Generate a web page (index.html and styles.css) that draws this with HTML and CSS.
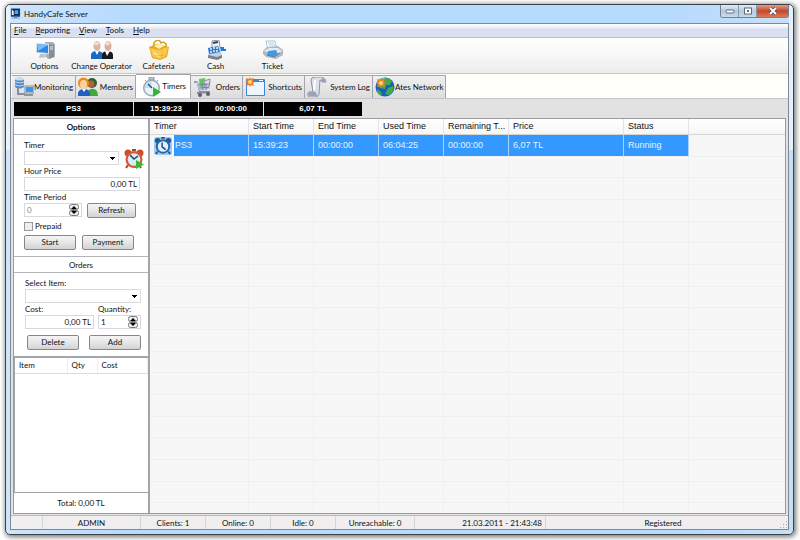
FILE: index.html
```html
<!DOCTYPE html>
<html lang="en">
<head>
<meta charset="utf-8">
<title>HandyCafe Server</title>
<link rel="stylesheet" href="styles.css">
</head>
<body>
<div class="window">
  <header class="titlebar">
    <svg class="app-icon" viewBox="0 0 12 12"><rect x="1" y="0" width="10" height="9" fill="#163f78"/><rect x="2" y="1" width="8" height="6" fill="#0d2750"/><path d="M5 2h4v4H5z" fill="#36b4f2"/><path d="M2 1l2 2v4H2z" fill="#fff"/><path d="M4 9h4v1h3v1H2v-1h2z" fill="#6f8fc0"/></svg>
    <h1 class="title">HandyCafe Server</h1>
    <div class="caption-buttons">
      <button class="caption" aria-label="Minimize"><svg viewBox="0 0 10 8"><rect x="1" y="3" width="8" height="3" rx="1" fill="#fff" stroke="#5d6c7c"/></svg></button>
      <button class="caption" aria-label="Maximize"><svg viewBox="0 0 10 8"><rect x="1.500" y="1" width="7" height="6" fill="#fff" stroke="#5d6c7c"/><rect x="4" y="3" width="2" height="2" fill="#5d6c7c"/></svg></button>
      <button class="caption close" aria-label="Close"><svg viewBox="0 0 10 8"><path d="M2 1l6 6M8 1L2 7" stroke="#5d4650" stroke-width="3.400"/><path d="M2 1l6 6M8 1L2 7" stroke="#fff" stroke-width="2"/></svg></button>
    </div>
  </header>
  <div class="client">
    <nav class="menubar">
      <a href="#"><u>F</u>ile</a><a href="#"><u>R</u>eporting</a><a href="#"><u>V</u>iew</a><a href="#"><u>T</u>ools</a><a href="#"><u>H</u>elp</a>
    </nav>
    <div class="toolbar">
      <button class="tool"><svg viewBox="0 0 20 20"><path d="M10 2h8l2 2v13l-7 2-2-2z" fill="#a9b1ba"/><path d="M14 4l5 1v12l-5 2z" fill="#858e99"/><path d="M15 7l3 0M15 9l3 0" stroke="#e8ecf0"/><path d="M1 3l13 1v10L1 13z" fill="#d8dfe6"/><path d="M2 4l11 1v8L2 12z" fill="#2e86e8"/><path d="M2 4l11 1-10 6z" fill="#74bdfa"/><path d="M5 14l5 0 2 3-8 1z" fill="#bcc3ca"/></svg>Options</button>
      <button class="tool"><svg class="wide" viewBox="0 0 24 20"><path d="M1 19v-4q0-3 4-4h4q4 1 4 4v4z" fill="#176bc4"/><path d="M12 19v-4q0-3 4-4h3q4 1 4 4v4z" fill="#17191e"/><path d="M5 11l2 4 2-4zM15 11l2 5 3-5z" fill="#fff"/><ellipse cx="7" cy="6" rx="3.500" ry="5" fill="#d9b49f"/><ellipse cx="18" cy="6" rx="3.500" ry="5" fill="#d9ae98"/><ellipse cx="6.500" cy="3.500" rx="2.500" ry="2" fill="#f3dccd"/><ellipse cx="17.500" cy="3.500" rx="2.500" ry="2" fill="#f3dccd"/></svg>Change Operator</button>
      <button class="tool"><svg viewBox="0 0 20 20"><path d="M5 8C3 0 11-2 12 3c4-3 7 3 4 6" fill="none" stroke="#dba11d" stroke-width="1.500"/><path d="M0 7l8-3 12 3-2 10-7 3-8-2z" fill="#eaa51a"/><path d="M1 8l9 2 9-3-2 9-6 3-7-2z" fill="#f9cb4c"/><path d="M5 6l5-2 5 2-5 3z" fill="#fff0a9"/><path d="M5 12q2 4 6 4" stroke="#fde28b" stroke-width="2" fill="none"/><path d="M5 16l12-1M13 9l0 9" stroke="#e5a52b" stroke-width=".6"/></svg>Cafeteria</button>
      <button class="tool"><svg viewBox="0 0 20 20"><path d="M6 1l7-1 1 7-8 2z" fill="#eef2f6" stroke="#8893a0"/><path d="M7 3l5-1" stroke="#39434e" stroke-width="2"/><path d="M4 8l10-2 2 11-5 3-9-3z" fill="#c6d0da"/><path d="M2 8l10-2 2 6-11 2z" fill="#2c76cb"/><path d="M4 9h2m1-1h2m1 0h2M4 12h2m1-1h2m1 0h2" stroke="#e7f5ff" stroke-width="1.500"/><path d="M14 7h4v2h2v2h-5z" fill="#2379db"/><path d="M2 15l9 2 5-2v3l-5 2-9-2z" fill="#768391"/></svg>Cash</button>
      <button class="tool"><svg viewBox="0 0 20 20"><path d="M3 1h9l2 9-9 1z" fill="#fff" stroke="#a9c4dd"/><path d="M5 3h6M6 5h6" stroke="#9dcaf0"/><path d="M0 11l4-4 11-1 5 4v5l-7 4-10-2-3-3z" fill="#aeb8c3"/><path d="M1 11l5-3 9 0 4 3-7 4z" fill="#e4ebf1"/><path d="M5 11l8-1 2 4-5 3-6-2z" fill="#3e9bea"/><path d="M4 15l7 2 6-4" stroke="#6b7885" fill="none"/></svg>Ticket</button>
    </div>
    <div class="tabs" role="tablist">
      <button class="tab t-monitoring" role="tab"><svg viewBox="0 0 20 20"><path d="M1 2q5-3 9 0v8q-5 3-9 0z" fill="#5389c8"/><ellipse cx="5.500" cy="2" rx="4.500" ry="1.500" fill="#c7def5"/><path d="M1 5q5 2 9 0M1 8q5 2 9 0" stroke="#bed8f4" fill="none"/><path d="M4 11v6h7" stroke="#8491a0" stroke-width="2" fill="none"/><rect x="11" y="9" width="9" height="7" fill="#e4e9ee" stroke="#7d8c9b"/><rect x="12" y="10" width="7" height="5" fill="#3897ed"/><path d="M10 18h9" stroke="#8e98a3" stroke-width="2"/></svg>Monitoring</button>
      <button class="tab t-members" role="tab"><svg viewBox="0 0 20 20"><circle cx="14" cy="6" r="5" fill="#2f612e"/><circle cx="13" cy="7" r="3.500" fill="#ab6435"/><path d="M10 19v-4q1-4 6-3 4 1 4 7z" fill="#42a93e"/><circle cx="5.500" cy="6" r="5.500" fill="#ed8b12"/><ellipse cx="5.500" cy="7.500" rx="3.500" ry="4.500" fill="#ffd0a2"/><path d="M0 19v-3q1-4 6-4t6 4v3z" fill="#225fc1"/><path d="M4 12l2 3 2-3z" fill="#fff"/></svg>Members</button>
      <button class="tab t-timers active" role="tab" aria-selected="true"><svg viewBox="0 0 20 20"><path d="M7 0h5v3H7zM3 3l2 2M16 3l-2 2" stroke="#8794a1" fill="#bdc8d2"/><circle cx="9.500" cy="11" r="8.500" fill="#9aa9b7"/><circle cx="9.500" cy="11" r="7" fill="#e8f3fb"/><path d="M9.500 11l0-7a7 7 0 0 0-7 7z" fill="#a4d2ee" opacity=".6"/><path d="M10 11L6 7" stroke="#29567c" stroke-width="1.500"/><path d="M11 10l8 5-8 5z" fill="#31b82d"/></svg>Timers</button>
      <button class="tab t-orders" role="tab"><svg viewBox="0 0 20 20"><path d="M1 5h3l3 10h10" fill="none" stroke="#788292" stroke-width="1.500"/><path d="M3 5l15-1-2 8-10 2z" fill="#bec5da"/><path d="M6 2l6-1 1 7-6 2z" fill="#62c75c"/><path d="M11 4l6-2-1 8-4 1z" fill="#e4d7e8" stroke="#9a91ad"/><path d="M5 8l12-1M6 11l10-1M9 6l1 7M13 6v7" stroke="#7a86a1"/><path d="M4 16l12-1" stroke="#8b899d" stroke-width="2"/><circle cx="7" cy="18" r="2" fill="#59606e"/><circle cx="15" cy="17" r="2" fill="#59606e"/></svg>Orders</button>
      <button class="tab t-shortcuts" role="tab"><svg viewBox="0 0 20 20"><rect x="1" y="2" width="19" height="17" rx="1" fill="#3b84df"/><rect x="2" y="5" width="17" height="13" fill="#edf6ff"/><path d="M14 3.500h4" stroke="#fff"/><path d="M5 0l1 2 3-1-1 3 2 1-2 1 1 3-3-1-1 2-1-2-3 1 1-3-2-1 2-1-1-3 3 1z" fill="#f2791f"/><circle cx="5" cy="5" r="2" fill="#ffd66d"/></svg>Shortcuts</button>
      <button class="tab t-log" role="tab"><svg viewBox="0 0 20 20"><path d="M4 3q0-3 4-3h7q3 1 4 5h-4q0-2-2-2l-1 14q-1 3-4 3H2q-3-3 0-5h4z" fill="#dde0e9" stroke="#8c92a3"/><path d="M15 5h4q1-3-3-4-3 1-1 4zM2 15h7q0 3 2 4H3q-3-1-1-4z" fill="#9ca2b5"/><path d="M8 3l-1 10" stroke="#fff" stroke-width="2"/></svg>System Log</button>
      <button class="tab t-network" role="tab"><svg viewBox="0 0 20 20"><circle cx="10" cy="10" r="9.500" fill="#1561be"/><path d="M6 2q7-3 11 2l-2 4-4 0-1 4-5-1-3-3zM13 11l5-2q2 6-4 9l-4-1zM2 12l4 3 1 4q-5-1-5-7z" fill="#45a94c"/><path d="M2 7q3-6 8-6" stroke="#75c5fa" fill="none"/><path d="M6 1l1 2 3-1-1 3 2 1-2 1 1 3-3-1-1 2-1-2-3 1 1-3-2-1 2-1-1-3 3 1z" fill="#ef8127"/><circle cx="6" cy="6" r="2" fill="#ffdc70"/></svg>Ates Network</button>
    </div>
    <main class="page">
      <div class="ticker"><span>PS3</span><span>15:39:23</span><span>00:00:00</span><span>6,07 TL</span></div>
      <div class="work">
        <aside class="side">
          <h2 class="section strong">Options</h2>
          <form class="options">
            <label for="timer">Timer</label>
            <div class="line timer-line">
              <select id="timer"><option></option></select>
              <svg class="alarm" viewBox="0 0 20 20"><circle cx="4" cy="4" r="3.500" fill="#cf4d29"/><circle cx="16" cy="4" r="3.500" fill="#cf4d29"/><path d="M4 16l-2 3M15 16l2 3M8 1h4" stroke="#a4482b" stroke-width="2"/><circle cx="10" cy="10.500" r="8.500" fill="#d95832"/><circle cx="10" cy="10.500" r="6.300" fill="#d6eefb"/><path d="M6 6l4 4 4-3" stroke="#26435c" stroke-width="1.500" fill="none"/><path d="M12 11l8 4.500-8 4.500z" fill="#38b830"/></svg>
            </div>
            <label for="price">Hour Price</label>
            <input id="price" class="amount" value="0,00 TL">
            <label for="period">Time Period</label>
            <div class="line">
              <span class="spin muted"><input id="period" value="0"><svg viewBox="0 0 10 12"><rect x=".5" y=".5" width="9" height="5" rx="2" fill="#eee" stroke="#777"/><rect x=".5" y="6.500" width="9" height="5" rx="2" fill="#eee" stroke="#777"/><path d="M2 5l3-3 3 3zM2 7l3 3 3-3z" fill="#000"/></svg></span>
              <button type="button" class="refresh">Refresh</button>
            </div>
            <label class="check"><input type="checkbox">Prepaid</label>
            <div class="line pair"><button type="button">Start</button><button type="button">Payment</button></div>
          </form>
          <h2 class="section">Orders</h2>
          <form class="orders">
            <label for="item">Select Item:</label>
            <select id="item"><option></option></select>
            <div class="line fields">
              <div class="field"><label for="cost">Cost:</label><input id="cost" class="amount" value="0,00 TL"></div>
              <div class="field qty"><label for="qty">Quantity:</label><span class="spin"><input id="qty" value="1"><svg viewBox="0 0 10 12"><rect x=".5" y=".5" width="9" height="5" rx="2" fill="#eee" stroke="#777"/><rect x=".5" y="6.500" width="9" height="5" rx="2" fill="#eee" stroke="#777"/><path d="M2 5l3-3 3 3zM2 7l3 3 3-3z" fill="#000"/></svg></span></div>
            </div>
            <div class="line actions"><button type="button">Delete</button><button type="button">Add</button></div>
          </form>
          <div class="basket">
            <table><thead><tr><th class="b-item">Item</th><th class="b-qty">Qty</th><th>Cost</th></tr></thead></table>
          </div>
          <p class="total">Total: 0,00 TL</p>
        </aside>
        <section class="list">
          <table class="timers">
            <colgroup><col class="c-timer"><col class="c-time"><col class="c-time"><col class="c-time"><col class="c-time"><col class="c-price"><col class="c-time"><col></colgroup>
            <thead><tr><th>Timer</th><th>Start Time</th><th>End Time</th><th>Used Time</th><th>Remaining T...</th><th>Price</th><th>Status</th><th></th></tr></thead>
            <tbody>
              <tr class="selected"><td><span class="name"><svg viewBox="0 0 20 20"><rect width="20" height="20" rx="3" fill="#9cc8f4"/><circle cx="4" cy="4" r="3" fill="#23578f"/><circle cx="16" cy="4" r="3" fill="#23578f"/><path d="M4 16l-2 3M16 16l2 3M8 1h4" stroke="#23578f" stroke-width="2"/><circle cx="10" cy="10.500" r="8" fill="#2868ab"/><circle cx="10" cy="10.500" r="5.800" fill="#e0f0ff"/><path d="M9 6v5l4 3" stroke="#17406d" stroke-width="1.500" fill="none"/></svg><b>PS3</b></span></td><td>15:39:23</td><td>00:00:00</td><td>06:04:25</td><td>00:00:00</td><td>6,07 TL</td><td>Running</td><td></td></tr>
              <tr><td></td><td></td><td></td><td></td><td></td><td></td><td></td><td></td></tr>
              <tr><td></td><td></td><td></td><td></td><td></td><td></td><td></td><td></td></tr>
              <tr><td></td><td></td><td></td><td></td><td></td><td></td><td></td><td></td></tr>
              <tr><td></td><td></td><td></td><td></td><td></td><td></td><td></td><td></td></tr>
              <tr><td></td><td></td><td></td><td></td><td></td><td></td><td></td><td></td></tr>
              <tr><td></td><td></td><td></td><td></td><td></td><td></td><td></td><td></td></tr>
              <tr><td></td><td></td><td></td><td></td><td></td><td></td><td></td><td></td></tr>
              <tr><td></td><td></td><td></td><td></td><td></td><td></td><td></td><td></td></tr>
              <tr><td></td><td></td><td></td><td></td><td></td><td></td><td></td><td></td></tr>
              <tr><td></td><td></td><td></td><td></td><td></td><td></td><td></td><td></td></tr>
              <tr><td></td><td></td><td></td><td></td><td></td><td></td><td></td><td></td></tr>
              <tr><td></td><td></td><td></td><td></td><td></td><td></td><td></td><td></td></tr>
              <tr><td></td><td></td><td></td><td></td><td></td><td></td><td></td><td></td></tr>
              <tr><td></td><td></td><td></td><td></td><td></td><td></td><td></td><td></td></tr>
              <tr><td></td><td></td><td></td><td></td><td></td><td></td><td></td><td></td></tr>
              <tr><td></td><td></td><td></td><td></td><td></td><td></td><td></td><td></td></tr>
              <tr class="last"><td></td><td></td><td></td><td></td><td></td><td></td><td></td><td></td></tr>
            </tbody>
          </table>
        </section>
      </div>
    </main>
    <footer class="status">
      <span class="s-blank"></span><span class="s-user">ADMIN</span><span class="s-count">Clients: 1</span><span class="s-count">Online: 0</span><span class="s-count">Idle: 0</span><span class="s-unreach">Unreachable: 0</span><span class="s-date">21.03.2011 - 21:43:48</span><span class="s-reg">Registered</span>
      <svg class="grip" viewBox="0 0 8 8"><path d="M6 0h1v1H6zM3 3h1v1H3zM6 3h1v1H6zM0 6h1v1H0zM3 6h1v1H3zM6 6h1v1H6z" fill="#aaa"/></svg>
    </footer>
  </div>
</div>
</body>
</html>
```
FILE: styles.css
```css
* { box-sizing: border-box; }
body {
  margin: 0;
  height: 100vh;
  padding: 4px 6px 5px 5px;
  display: flex;
  background: #fff;
  color: #111;
  font: 8px/11px Lato, "Liberation Sans", Arial, sans-serif;
}
button, input, select { font: inherit; color: inherit; margin: 0; padding: 0; }
svg { display: block; flex: none; }
h1, h2, p { margin: 0; font: inherit; }

.window {
  flex: 1;
  min-width: 0;
  display: flex;
  flex-direction: column;
  padding: 0 4px 4px;
  border: 1px solid #3b4148;
  border-radius: 5px;
  background:
    linear-gradient(#fff8, #fff8) left top / 4px 145px no-repeat,
    linear-gradient(#fff8, #fff8) right top / 4px 145px no-repeat,
    linear-gradient(90deg, #cfe5fa, #b7daff 15%, #b7daff 85%, #c6e0f8);
  box-shadow: 1px 1px 5px 1px #777;
}
.titlebar { flex: none; height: 18px; display: flex; align-items: center; }
.app-icon { width: 11px; height: 12px; }
.title { flex: 1; margin-left: 3px; }
.caption-buttons {
  align-self: flex-start;
  display: flex;
  border: 1px solid #6f8295;
  border-top: 0;
  border-radius: 0 0 3px 3px;
  overflow: hidden;
}
.caption {
  width: 18px;
  height: 12px;
  display: grid;
  place-items: center;
  border: 0;
  border-right: 1px solid #8799aa;
  background: linear-gradient(#e0edf9, #b6c9dc 50%, #c9dcef);
}
.caption svg { width: 10px; height: 8px; }
.caption.close { width: 31px; border: 0; background: linear-gradient(#e59d88, #c3472b 50%, #dc7857); }

.client {
  flex: 1;
  display: flex;
  flex-direction: column;
  border: 1px solid #7d8995;
  background: #ececec;
}
.menubar {
  flex: none;
  height: 14px;
  display: flex;
  align-items: center;
  gap: 9px;
  padding-left: 3px;
  background: linear-gradient(#fff, #eceef8 30%, #d8ddf0 40%, #dde2f2);
  border-bottom: 1px solid #b9bfca;
}
.menubar a { color: inherit; text-decoration: none; }
.toolbar {
  flex: none;
  height: 36px;
  display: flex;
  padding: 2px 0 0 5px;
  background: linear-gradient(#fff, #f7f7f7 50%, #ececec);
  border-bottom: 1px solid #c6c6c6;
}
.tool {
  width: 57px;
  display: flex;
  flex-direction: column;
  align-items: center;
  gap: 1px;
  border: 0;
  background: none;
  white-space: nowrap;
}
.tool svg { width: 20px; height: 20px; }
.tool svg.wide { width: 24px; }

.tabs { flex: none; height: 25px; display: flex; align-items: flex-end; background: #fffffa; padding: 0 1px; border-bottom: 1px solid #c5c5ce; }
.tab {
  height: 23px;
  display: flex;
  align-items: center;
  justify-content: space-between;
  padding: 0 2px;
  border: 1px solid #a5a5a9;
  border-width: 1px 1px 0 0;
  background: linear-gradient(#f0f0f0, #dcdcdc);
  white-space: nowrap;
}
.tab svg { width: 20px; height: 20px; }
.tab.active { height: 24px; background: #fff; padding: 0 4px 0 6px; }
.t-monitoring { width: 64px; }
.t-members { width: 60px; }
.t-timers { width: 55px; }
.t-orders { width: 52px; }
.t-shortcuts { width: 62px; }
.t-log { width: 68px; }
.t-network { width: 73px; }

.page { flex: 1; display: flex; flex-direction: column; padding: 3px 2px 1px; background: #e2e2e2; }
.ticker { flex: none; display: flex; gap: 1px; height: 14px; margin-left: 1px; color: #fff; font: bold 8px/14px "Liberation Sans", Arial, sans-serif; text-align: center; }
.ticker span { width: 64px; background: #000; }
.ticker span:first-child { width: 119px; }
.ticker span:last-child { width: 98px; }
.work { flex: 1; display: flex; margin-top: 2px; border: 1px solid #9a9aa0; background: #fff; }
.side { flex: none; width: 136px; display: flex; flex-direction: column; border-right: 2px solid #a3a5ad; }
.section { height: 16px; line-height: 16px; text-align: center; border-bottom: 1px solid #b4b4bb; }
.strong { font-weight: bold; }
.options { height: 122px; padding: 5px 8px 0 10px; border-bottom: 1px solid #b4b4bb; }
.orders { height: 83px; padding: 5px 7px 0 11px; }
.side label { display: block; height: 11px; }
.line { display: flex; gap: 5px; }
.side form input, .side form select { height: 14px; border: 1px solid #d8d8de; background: #fff; border-radius: 0; }
.side form select {
  display: block;
  width: 100%;
  appearance: none;
  background:
    linear-gradient(#000, #000) right 3px top 5px / 5px 1px no-repeat,
    linear-gradient(#000, #000) right 4px top 6px / 3px 1px no-repeat,
    linear-gradient(#000, #000) right 5px top 7px / 1px 1px no-repeat,
    #fff;
}
.side form .timer-line select { flex: 1; min-width: 0; }
.alarm { width: 20px; height: 20px; margin: -2px -4px -4px 0; }
.side form .amount { display: block; width: 100%; text-align: right; padding-right: 2px; }
.spin { width: 58px; height: 14px; display: flex; align-items: center; border: 1px solid #d8d8de; padding-right: 2px; }
.side .spin input { flex: 1; min-width: 0; height: 12px; border: 0; padding-left: 2px; background: none; }
.spin svg { width: 10px; height: 12px; }
.muted { color: #888; }
.side button {
  height: 15px;
  border: 1px solid #888;
  border-radius: 2px;
  background: linear-gradient(#f5f5f5, #e6e6e6 50%, #d2d2d2);
}
.refresh { width: 49px; }
.side .check { display: flex; align-items: center; gap: 2px; }
.side form .check input { appearance: none; width: 9px; height: 9px; border: 1px solid #999; background: #eee; }
.pair button { width: 52px; }
.options > label:not(:first-child) { margin-top: 1px; }
.options > .check:not(:first-child), .pair { margin-top: 3px; }
.pair { gap: 6px; }
.field { width: 69px; }
.fields { gap: 4px; margin-top: 1px; }
.qty, .qty .spin { width: 43px; }
.actions { justify-content: space-between; padding-left: 2px; margin-top: 6px; }
.actions button { width: 52px; }

.basket { flex: 1; border: solid #a3a5ad; border-width: 2px 0 1px 1px; }
.basket table { width: 100%; border-collapse: collapse; table-layout: fixed; }
.basket th { height: 15px; padding: 0 0 0 4px; font-weight: normal; text-align: left; border-right: 1px solid #ececec; border-bottom: 1px solid #ddd; }
.b-item { width: 52px; }
.b-qty { width: 30px; }
.total { height: 20px; line-height: 20px; text-align: center; }

.list { flex: 1; min-width: 0; background: #f7f7f7; font: 9px/11px "Liberation Sans", Arial, sans-serif; }
.timers { width: 100%; border-spacing: 0; table-layout: fixed; }
.c-timer { width: 99px; }
.c-time { width: 65px; }
.c-price { width: 115px; }
.timers th, .timers td { padding: 0 0 0 4px; text-align: left; font-weight: normal; white-space: nowrap; }
.timers th { height: 16px; background: linear-gradient(#fff, #f6f6f6); border-right: 1px solid #e4e4e6; border-bottom: 1px solid #d5d5d5; }
.timers th:last-child { border-right: 0; }
.timers td { height: 22px; border: solid #f0f0f0; border-width: 0 1px 1px 0; }
.timers td:last-child { border-right: 0; }
.timers tr:nth-child(3n+2) td { height: 21px; }
.timers tr.last td { height: 9px; border-bottom: 0; }
.timers .selected td { background: #3399ff; color: #e4f2ff; border-right-color: #a8d2fb; }
.timers .selected td:first-child { padding-left: 0; }
.timers .selected td:last-child { background: none; }
.name { display: flex; align-items: center; height: 21px; background: #f7f7f7; }
.name svg { width: 18px; height: 18px; margin: 0 2px 0 4px; }
.name b { flex: 1; padding-left: 1px; font-weight: normal; line-height: 21px; background: #3399ff; }

.status { flex: none; height: 14px; display: flex; background: #f0eeee; border-top: 1px solid #bbb; line-height: 15px; text-align: center; white-space: nowrap; }
.status span { border-right: 1px solid #d5d5d5; }
.s-blank { width: 32px; }
.s-user { width: 98px; }
.s-count { width: 65px; }
.s-unreach { width: 79px; }
.s-date { width: 131px; text-align: right; padding-right: 3px; }
.status .s-reg { flex: 1; border: 0; }
.grip { width: 8px; height: 8px; align-self: flex-end; }
```
